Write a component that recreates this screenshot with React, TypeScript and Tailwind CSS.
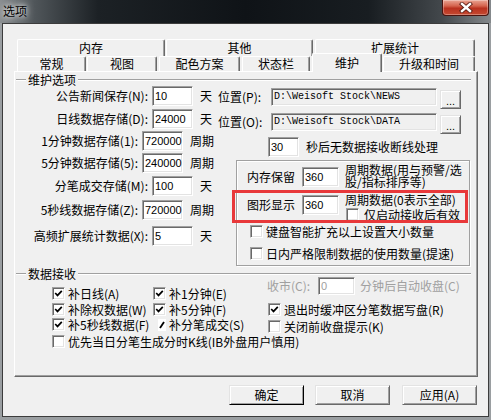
import type { ReactNode } from 'react';

const sunken =
  'border border-t-[#a0a0a0] border-l-[#a0a0a0] border-r-white border-b-white shadow-[inset_1px_1px_0_#696969,inset_-1px_-1px_0_#e3e3e3]';
const raised =
  'border border-t-[#e3e3e3] border-l-[#e3e3e3] border-r-[#696969] border-b-[#696969] shadow-[inset_1px_1px_0_#fff,inset_-1px_-1px_0_#a0a0a0]';
const num = "font-['Liberation_Sans',sans-serif] text-[11px]";

function Field({ value, w, h = 'h-[20px]', bg = 'bg-white' }: { value: string; w: string; h?: string; bg?: string }) {
  return (
    <div className={`${w} ${h} ${bg} ${sunken} ${num} shrink-0 flex items-center pl-[2px] overflow-hidden whitespace-nowrap`}>
      {value}
    </div>
  );
}

function Check({ on }: { on?: boolean }) {
  return (
    <span className={`w-[13px] h-[13px] shrink-0 bg-white flex items-center justify-center ${sunken}`}>
      {on && (
        <svg width="9" height="9" viewBox="0 0 9 9">
          <path d="M1.2 4 L3.5 6.4 L7.8 1.8" fill="none" stroke="#000" strokeWidth="1.7" />
        </svg>
      )}
    </span>
  );
}

function CheckRow({ on, label, className = '' }: { on?: boolean; label: string; className?: string }) {
  return (
    <div className={`flex items-center h-[13px] whitespace-nowrap ${className}`}>
      <Check on={on} />
      <span className="ml-[3px] leading-[13px]">{label}</span>
    </div>
  );
}

function Tab({ label, w, active }: { label: string; w: string; active?: boolean }) {
  return (
    <div
      className={`${w} ${active ? 'h-[19px] -mt-[3px] relative z-10' : 'h-full'} shrink-0 bg-[#f0f0f0] rounded-t-[2px] border border-b-0 border-t-white border-l-white border-r-[#696969] shadow-[inset_-1px_0_0_#a0a0a0] flex items-center justify-center leading-[14px]`}
    >
      {label}
    </div>
  );
}

function Btn({ children, w, def }: { children: ReactNode; w: string; def?: boolean }) {
  return (
    <div
      className={`${w} h-[20px] ${raised} ${def ? 'border-r-black border-b-black' : ''} flex items-center justify-center leading-[14px]`}
    >
      {children}
    </div>
  );
}

function Legend({ text, lead }: { text: string; lead: string }) {
  return (
    <div className={`flex items-center ${lead}`}>
      <div className="w-[10px] h-[2px] border-t border-t-[#a0a0a0] border-b border-b-white" />
      <span className="px-[2px] leading-[12px]">{text}</span>
      <div className="flex-1 h-[2px] border-t border-t-[#a0a0a0] border-b border-b-white" />
    </div>
  );
}

const leftRows = [
  { label: '公告新闻保存(N):', value: '10', unit: '天', mt: 'mt-0' },
  { label: '日线数据存储(D):', value: '24000', unit: '天', mt: 'mt-[3px]' },
  { label: '1分钟数据存储(1):', value: '720000', unit: '周期', mt: 'mt-[2px]' },
  { label: '5分钟数据存储(5):', value: '240000', unit: '周期', mt: 'mt-[2px]' },
  { label: '分笔成交存储(M):', value: '100', unit: '天', mt: 'mt-[3px]' },
  { label: '5秒线数据存储(Z):', value: '720000', unit: '周期', mt: 'mt-[4px]' },
  { label: '高频扩展统计数据(X):', value: '5', unit: '天', mt: 'mt-[6px]' },
];

function PathRow({ label, path, mt }: { label: string; path: string; mt: string }) {
  return (
    <div className={`flex items-start ${mt}`}>
      <span className="w-[53px] leading-[18px] whitespace-nowrap">{label}</span>
      <div
        className={`w-[166px] h-[18px] bg-[#f0f0f0] ${sunken} font-['Liberation_Mono',monospace] text-[10px] flex items-center pl-[2px] whitespace-nowrap`}
      >
        {path}
      </div>
      <div className={`ml-[3px] mt-[2px] w-[21px] h-[19px] ${raised} ${num} flex items-end justify-center pb-[2px] leading-[10px]`}>
        ...
      </div>
    </div>
  );
}

export default function App() {
  return (
    <div className="w-[491px] h-[420px] flex flex-col overflow-hidden font-['Noto_Sans_CJK_SC',sans-serif] text-[12px] leading-[14px] text-black">
      {/* title bar */}
      <div className="h-[23px] shrink-0 flex items-start justify-between bg-[linear-gradient(90deg,#8a8e91_0%,#50565a_7%,#1c2125_20%,#0f1317_50%,#181d21_75%,#43484c_90%,#85898c_100%)]">
        <span className="ml-[3px] mt-[4px] leading-[14px] [text-shadow:0_0_5px_#fff,0_0_9px_#ddd]">选项</span>
        <div className="mr-[2px] w-[47px] h-[16px] rounded-b-[4px] border border-t-0 border-[#4a130e] bg-[linear-gradient(180deg,#e9a493_0%,#d4634d_40%,#b9311f_55%,#c54a31_100%)] shadow-[inset_0_0_0_1px_rgba(255,255,255,0.3)] flex items-center justify-center">
          <svg width="14" height="11" viewBox="0 0 14 11">
            <path d="M3 2 L11 9 M11 2 L3 9" stroke="#5a1d15" strokeWidth="4.2" strokeLinecap="square" />
            <path d="M3 2 L11 9 M11 2 L3 9" stroke="#fff" strokeWidth="2.4" strokeLinecap="square" />
          </svg>
        </div>
      </div>

      {/* frame + client */}
      <div className="flex-1 flex bg-[#9a9ea1] pl-[2px] pr-[2px] pb-[3px]">
        <div className="flex-1 bg-[#f0f0f0] border border-[#3c3c3c] flex flex-col">
          {/* tabs */}
          <div className="mt-[15px] ml-[14px] flex flex-col">
            <div className="h-[17px] flex">
              <Tab label="内存" w="w-[148px]" />
              <div className="w-[1px]" />
              <Tab label="其他" w="w-[147px]" />
              <div className="w-[2px]" />
              <Tab label="扩展统计" w="w-[160px]" />
            </div>
            <div className="h-[15px] flex items-start">
              <Tab label="常规" w="w-[69px]" />
              <div className="w-[1px]" />
              <Tab label="视图" w="w-[70px]" />
              <div className="w-[2px]" />
              <Tab label="配色方案" w="w-[81px]" />
              <div className="w-[2px]" />
              <Tab label="状态栏" w="w-[68px]" />
              <div className="w-[2px]" />
              <Tab label="维护" w="w-[70px]" active />
              <div className="w-[1px]" />
              <Tab label="升级和时间" w="w-[92px]" />
            </div>
          </div>

          {/* panel */}
          <div className="ml-[11px] w-[464px] h-[306px] shrink-0 border border-t-white border-l-white border-r-[#696969] border-b-[#696969] shadow-[inset_-1px_-1px_0_#a0a0a0] flex flex-col">
            {/* 维护选项 */}
            <div className="ml-[1px] w-[455px] flex flex-col">
              <Legend text="维护选项" lead="mt-[1px] h-[13px]" />
              <div className="flex">
                <div className="w-[198px] flex flex-col">
                  {leftRows.map((r) => (
                    <div key={r.label} className={`flex items-center h-[20px] ${r.mt}`}>
                      <span className="w-[132px] text-right whitespace-nowrap">{r.label}</span>
                      <div className="ml-[4px]">
                        <Field value={r.value} w="w-[41px]" />
                      </div>
                      <span className="ml-[7px] whitespace-nowrap">{r.unit}</span>
                    </div>
                  ))}
                </div>
                <div className="flex-1 pl-[4px] flex flex-col">
                  <PathRow label="位置(P):" path={'D:\\Weisoft Stock\\NEWS'} mt="mt-[2px]" />
                  <PathRow label="位置(O):" path={'D:\\Weisoft Stock\\DATA'} mt="mt-[4px]" />
                  <div className="mt-[3px] ml-[50px] flex items-center h-[20px]">
                    <Field value="30" w="w-[31px]" />
                    <span className="ml-[7px] whitespace-nowrap">秒后无数据接收断线处理</span>
                  </div>
                  {/* inner box */}
                  <div className="mt-[3px] ml-[18px] w-[234px] h-[106px] relative border border-[#a0a0a0] shadow-[inset_1px_1px_0_#fff,1px_1px_0_#fff] flex flex-col">
                    <div className="mt-[2px] flex items-start h-[26px]">
                      <div className="mt-[4px] ml-[10px] flex items-center h-[20px]">
                        <span className="w-[55px] whitespace-nowrap">内存保留</span>
                        <Field value="360" w="w-[37px]" />
                      </div>
                      <div className="ml-[6px] mt-[1px] leading-[12px]">
                        <div className="whitespace-nowrap">周期数据(用与预警/选</div>
                        <div className="whitespace-nowrap">股/指标排序等)</div>
                      </div>
                    </div>
                    <div className="mt-[4px] flex items-start h-[28px]">
                      <div className="mt-[2px] ml-[10px] flex items-center h-[20px]">
                        <span className="w-[55px] whitespace-nowrap">图形显示</span>
                        <Field value="360" w="w-[37px]" />
                      </div>
                      <div className="ml-[6px] flex flex-col">
                        <div className="h-[14px] leading-[13px] whitespace-nowrap">周期数据(0表示全部)</div>
                        <CheckRow label="仅启动接收后有效" className="ml-[1px] mt-[1px] gap-[2px]" />
                      </div>
                    </div>
                    <CheckRow label="键盘智能扩充以上设置大小数量" className="mt-[4px] ml-[13px]" />
                    <CheckRow label="日内严格限制数据的使用数量(提速)" className="mt-[9px] ml-[13px]" />
                    <div className="absolute left-[-5px] top-[29px] w-[236px] h-[33px] border-[3px] border-[#e8383a]" />
                  </div>
                </div>
              </div>
            </div>

            {/* 数据接收 */}
            <div className="ml-[1px] w-[455px] flex flex-col">
              <Legend text="数据接收" lead="mt-[2px] h-[12px]" />
              <div className="flex">
                <div className="ml-[36px] w-[215px] mt-[7px] flex flex-col">
                  <div className="flex">
                    <CheckRow on label="补日线(A)" className="w-[101px]" />
                    <CheckRow on label="补1分钟(E)" />
                  </div>
                  <div className="flex mt-[3px]">
                    <CheckRow on label="补除权数据(W)" className="w-[101px]" />
                    <CheckRow on label="补5分钟(F)" />
                  </div>
                  <div className="flex mt-[2px]">
                    <CheckRow on label="补5秒线数据(F)" className="w-[101px] relative z-10" />
                    <div className="flex items-center h-[13px] whitespace-nowrap">
                      <span className="w-[13px] h-[13px] flex items-center justify-end">
                        <span className="w-[8px] h-[12px] bg-white flex items-center justify-center">
                          <svg width="6" height="8" viewBox="0 0 6 8">
                            <path d="M1 7 L5 1" stroke="#000" strokeWidth="1.8" />
                          </svg>
                        </span>
                      </span>
                      <span className="ml-[3px] leading-[13px]">补分笔成交(S)</span>
                    </div>
                  </div>
                </div>
                <div className="-mt-[3px] flex flex-col">
                  <div className="flex items-center h-[18px] text-[#a0a0a0]">
                    <span className="w-[51px] whitespace-nowrap">收市(C):</span>
                    <Field value="0" w="w-[37px]" h="h-[18px]" />
                    <span className="ml-[5px] whitespace-nowrap">分钟后自动收盘(C)</span>
                  </div>
                  <CheckRow on label="退出时缓冲区分笔数据写盘(R)" className="mt-[8px] ml-[1px]" />
                  <CheckRow label="关闭前收盘提示(K)" className="mt-[4px] ml-[1px]" />
                </div>
              </div>
              <CheckRow label="优先当日分笔生成分时K线(IB外盘用户慎用)" className="mt-[2px] ml-[36px]" />
            </div>
          </div>

          {/* buttons */}
          <div className="mt-[8px] ml-[226px] flex">
            <Btn w="w-[75px]" def>确定</Btn>
            <div className="w-[11px]" />
            <Btn w="w-[75px]">取消</Btn>
            <div className="w-[12px]" />
            <Btn w="w-[75px]">应用(A)</Btn>
          </div>
        </div>
      </div>
    </div>
  );
}
